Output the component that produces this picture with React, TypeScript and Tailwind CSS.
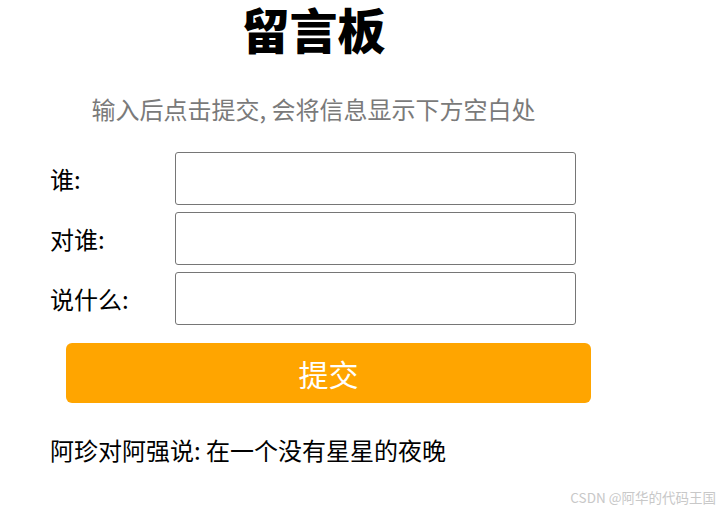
import React from 'react';

const font = { fontFamily: '"Noto Sans CJK SC", "Noto Sans", sans-serif' };

const Field = ({ label }: { label: string }) => (
  <div className="flex items-center h-[53px]">
    <label className="w-[125px] text-[24px] text-black leading-none">{label}</label>
    <input className="w-[401px] h-[53px] border border-[#767676] rounded-[3px] bg-white outline-none" />
  </div>
);

const App = () => {
  return (
    <div className="relative w-[726px] h-[510px] bg-white overflow-hidden" style={font}>
      <div className="pl-[50px]">
        <div className="w-[527px] flex flex-col items-center">
          <h1 className="text-[48px] font-black leading-[56px] text-black">留言板</h1>
          <p className="mt-[38px] text-[24px] leading-[30px] text-[#7a7a7a]">
            输入后点击提交, 会将信息显示下方空白处
          </p>
        </div>

        <div className="mt-[28px] flex flex-col gap-[7px]">
          <Field label="谁:" />
          <Field label="对谁:" />
          <Field label="说什么:" />
        </div>

        <button className="mt-[18px] ml-[16px] w-[525px] h-[60px] rounded-[6px] bg-[#ffa500] text-white text-[30px] leading-none">
          提交
        </button>

        <div className="mt-[32px] text-[24px] leading-[30px] text-black">
          阿珍对阿强说: 在一个没有星星的夜晚
        </div>
      </div>

      <div className="absolute right-[10px] bottom-[6px] text-[13.5px] text-[#c8c8c8] leading-none">
        CSDN @阿华的代码王国
      </div>
    </div>
  );
};

export default App;
